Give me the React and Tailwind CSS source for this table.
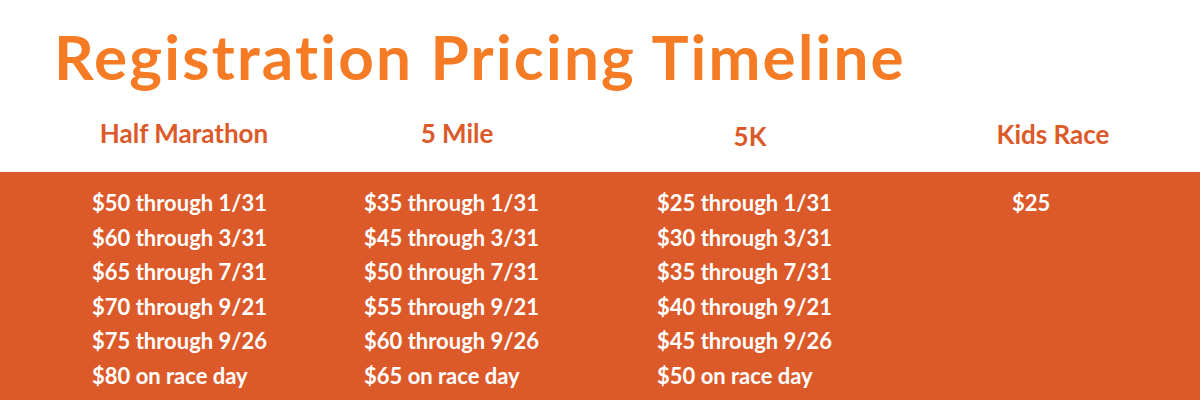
import React from 'react'

const headers = [
  { label: 'Half Marathon', w: 'w-[368px]', pt: 'pt-[0px]' },
  { label: '5 Mile', w: 'w-[178px]', pt: 'pt-[0px]' },
  { label: '5K', w: 'w-[408px]', pt: 'pt-[3px]' },
  { label: 'Kids Race', w: 'w-[198px]', pt: 'pt-[1px]' },
]

const columns = [
  {
    w: 'w-[272px]',
    rows: ['$50 through 1/31', '$60 through 3/31', '$65 through 7/31', '$70 through 9/21', '$75 through 9/26', '$80 on race day'],
  },
  {
    w: 'w-[293px]',
    rows: ['$35 through 1/31', '$45 through 3/31', '$50 through 7/31', '$55 through 9/21', '$60 through 9/26', '$65 on race day'],
  },
  {
    w: 'w-[355px]',
    rows: ['$25 through 1/31', '$30 through 3/31', '$35 through 7/31', '$40 through 9/21', '$45 through 9/26', '$50 on race day'],
  },
  { w: 'w-[150px]', rows: ['$25'] },
]

export default function App() {
  return (
    <div className="h-[400px] w-[1200px] overflow-hidden bg-white font-['Lato','Open_Sans',sans-serif] [font-variant-ligatures:none]">
      <div className="h-[172px]">
        <h1 className="pl-[54px] pt-[20px] text-[62px] font-bold leading-[72px] tracking-[2.2px] text-[#f57c25]">
          Registration Pricing Timeline
        </h1>
        <div className="mt-[26px] flex">
          {headers.map((h) => (
            <div key={h.label} className={`${h.w} ${h.pt} text-center text-[26px] font-bold leading-[30px] text-[#dc5a29]`}>
              {h.label}
            </div>
          ))}
        </div>
      </div>
      <div className="flex h-[228px] bg-[#dc5a29] pl-[92px] pt-[14px]">
        {columns.map((c, i) => (
          <div key={i} className={`${c.w} flex flex-col`}>
            {c.rows.map((r) => (
              <div key={r} className="text-[22px] font-bold leading-[34.6px] text-white">
                {r}
              </div>
            ))}
          </div>
        ))}
      </div>
    </div>
  )
}
